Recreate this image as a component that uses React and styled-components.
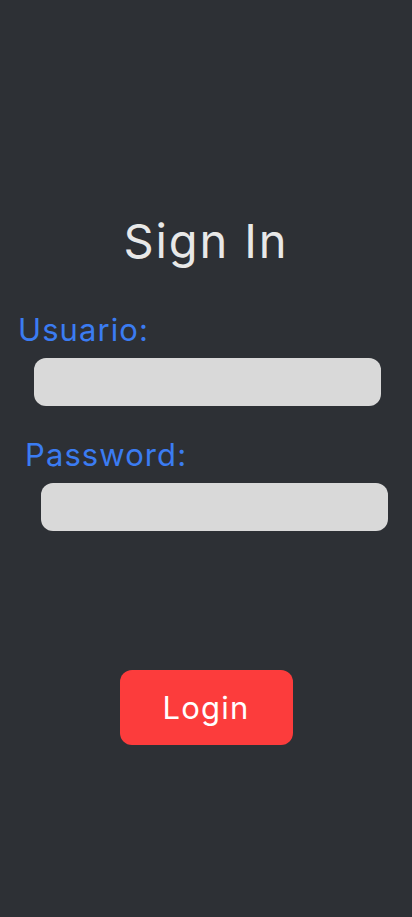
import React from 'react'
import styled, { createGlobalStyle } from 'styled-components'

const Global = createGlobalStyle`
  html, body {
    margin: 0;
    padding: 0;
    background: #2d3035;
  }
  * { box-sizing: border-box; }
`

const Page = styled.div`
  min-height: 917px;
  background: #2d3035;
  font-family: Inter, "Noto Sans", sans-serif;
  display: flex;
  flex-direction: column;
  padding-top: 209px;
`

const Title = styled.h1`
  margin: 0;
  text-align: center;
  color: #e8e8e8;
  font-weight: 400;
  font-size: 47px;
  letter-spacing: 0.04em;
  line-height: 64px;
`

const Form = styled.form`
  display: flex;
  flex-direction: column;
  margin-top: 37px;
`

const Field = styled.div`
  display: flex;
  flex-direction: column;
  margin-left: ${p => p.$shift}px;
  margin-bottom: 29px;
`

const Label = styled.label`
  color: #3b7cf2;
  font-size: 31px;
  letter-spacing: 0.035em;
  line-height: 40px;
`

const Input = styled.input`
  margin: 8px 0 0 16px;
  width: 347px;
  height: 48px;
  border: none;
  border-radius: 12px;
  background: #d9d9d9;
  outline: none;
`

const Button = styled.button`
  align-self: center;
  margin-top: 110px;
  width: 173px;
  height: 75px;
  border: none;
  border-radius: 12px;
  background: #fc3c3c;
  color: #fff;
  font-family: inherit;
  letter-spacing: 0.04em;
  font-size: 31px;
  cursor: pointer;
`

export default function App() {
  return (
    <Page>
      <Global />
      <Title>Sign In</Title>
      <Form>
        <Field $shift={18}>
          <Label>Usuario:</Label>
          <Input type="text" />
        </Field>
        <Field $shift={25}>
          <Label>Password:</Label>
          <Input type="password" />
        </Field>
      </Form>
      <Button type="button">Login</Button>
    </Page>
  )
}
